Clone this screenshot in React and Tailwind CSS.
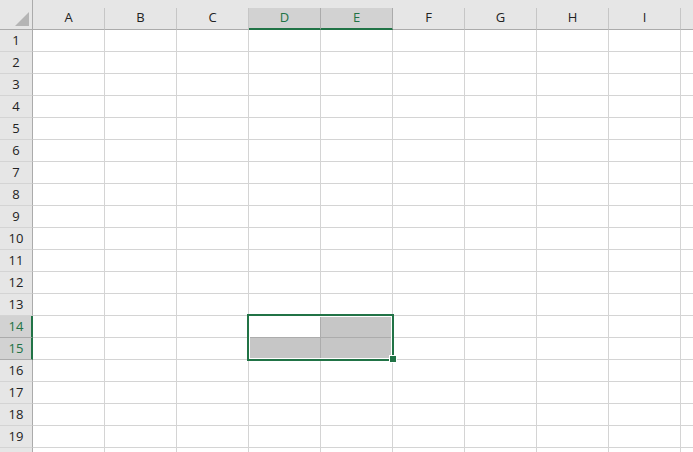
const cols = ["A", "B", "C", "D", "E", "F", "G", "H", "I", "J"];
const rows = Array.from({ length: 20 }, (_, i) => i + 1);

const selCols = ["D", "E"];
const selRows = [14, 15];

// J and row 20 sit past the edge of the window, so their labels are left out
const hiddenCol = "J";
const hiddenRow = 20;

function isFilled(col, row) {
  if (!selCols.includes(col) || !selRows.includes(row)) return false;
  return !(col === "D" && row === 14);
}

export default function App() {
  return (
    <div
      className="relative h-[452px] w-[693px] overflow-hidden bg-white text-[13px] text-[#222]"
      style={{ fontFamily: '"Open Sans", "Noto Sans", sans-serif' }}
    >
      {/* column headers */}
      <div className="flex h-[30px] bg-[#e6e6e6]">
        <div className="relative h-[30px] w-[33px] shrink-0 border-r border-b border-[#ababab]">
          <svg className="absolute left-[15px] top-[12px]" width="14" height="14" viewBox="0 0 14 14">
            <polygon points="14,0 14,14 0,14" fill="#b5b5b5" />
          </svg>
        </div>
        {cols.map((c) => {
          const sel = selCols.includes(c);
          return (
            <div key={c} className="flex w-[72px] shrink-0 flex-col">
              <div className="h-[8px]" />
              <div
                className={
                  sel
                    ? "flex h-[22px] items-center justify-center border-r border-r-[#ababab] border-b-2 border-b-[#217346] bg-[#d2d2d2] pb-[1px] text-[#217346]"
                    : "flex h-[22px] items-center justify-center border-r border-b border-r-[#c6c6c6] border-b-[#ababab] pb-[1px]"
                }
              >
                {c === hiddenCol ? "" : c}
              </div>
            </div>
          );
        })}
      </div>

      {/* rows */}
      {rows.map((r) => {
        const sel = selRows.includes(r);
        return (
          <div key={r} className="flex h-[22px]">
            <div
              className={
                sel
                  ? "flex w-[33px] shrink-0 items-center justify-center border-r-2 border-b border-r-[#217346] border-b-[#ababab] bg-[#d2d2d2] pl-[1px] text-[#217346]"
                  : "flex w-[33px] shrink-0 items-center justify-center border-r border-b border-r-[#ababab] border-b-[#d4d4d4] bg-[#e6e6e6]"
              }
            >
              {r === hiddenRow ? "" : r}
            </div>
            {cols.map((c) => {
              const inSel = selCols.includes(c) && sel;
              return (
                <div
                  key={c}
                  className={
                    (isFilled(c, r) ? "bg-[#c6c6c6] " : "") +
                    (inSel ? "border-[#acacac] " : "border-[#d4d4d4] ") +
                    "w-[72px] shrink-0 border-r border-b"
                  }
                />
              );
            })}
          </div>
        );
      })}

      {/* selection outline */}
      <div className="absolute left-[247px] top-[314px] h-[47px] w-[147px] border-2 border-[#217346]">
        <div className="h-full w-full border border-white" />
      </div>
      <div className="absolute left-[389px] top-[355px] h-[8px] w-[8px] border border-white bg-[#217346]" />
    </div>
  );
}
